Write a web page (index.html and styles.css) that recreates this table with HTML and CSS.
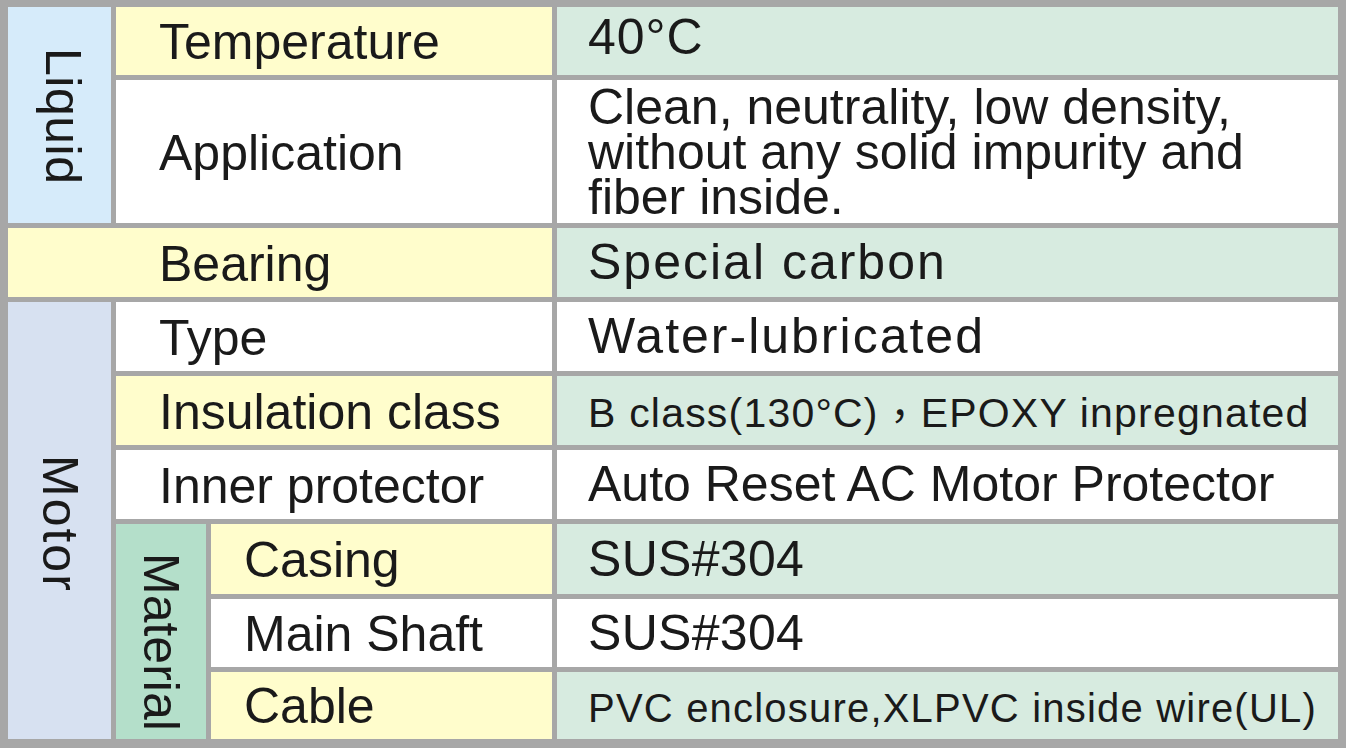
FILE: index.html
```html
<!DOCTYPE html>
<html lang="en">
<head>
<meta charset="utf-8">
<title>Specifications</title>
<link rel="stylesheet" href="styles.css">
</head>
<body>
<div class="spec">
  <div class="group liquid"><span class="vtext">Liquid</span></div>
  <div class="label yellow r1">Temperature</div>
  <div class="value green r1 up">40°C</div>
  <div class="label white r2">Application</div>
  <div class="value white r2 multi">Clean, neutrality, low density,<br>without any solid impurity and<br>fiber inside.</div>
  <div class="label yellow r3 bearing">Bearing</div>
  <div class="value green r3 wide">Special carbon</div>
  <div class="group motor"><span class="vtext">Motor</span></div>
  <div class="label white r4">Type</div>
  <div class="value white r4 wide">Water-lubricated</div>
  <div class="label yellow r5">Insulation class</div>
  <div class="value green r5 small bclass">B class(130°C)<span class="fwcomma">，</span>EPOXY inpregnated</div>
  <div class="label white r6">Inner protector</div>
  <div class="value white r6">Auto Reset AC Motor Protector</div>
  <div class="group material"><span class="vtext">Material</span></div>
  <div class="sublabel yellow r7">Casing</div>
  <div class="value green r7 sus">SUS#304</div>
  <div class="sublabel white r8">Main Shaft</div>
  <div class="value white r8 sus">SUS#304</div>
  <div class="sublabel yellow r9">Cable</div>
  <div class="value green r9 small">PVC enclosure,XLPVC inside wire(UL)</div>
</div>
</body>
</html>
```
FILE: styles.css
```css
html, body {
  margin: 0;
  padding: 0;
}
body {
  width: 1346px;
  height: 748px;
  background: #a7a7a7;
  font-family: "Liberation Sans", Arial, "Noto Sans CJK TC", sans-serif;
  color: #1a1a1a;
  overflow: hidden;
}
.spec {
  box-sizing: border-box;
  width: 1346px;
  height: 748px;
  padding: 7px 8px 9px 8px;
  display: grid;
  grid-template-columns: 103px 90px 341px 781px;
  grid-template-rows: 68px 143px 69px 69px 69px 69px 70px 68px 67px;
  column-gap: 5px;
  row-gap: 5px;
}
.spec > div {
  display: flex;
  align-items: center;
  font-size: 50px;
  line-height: 45px;
  white-space: nowrap;
}
.yellow { background: #fffdcc; }
.green { background: #d7ebe0; }
.white { background: #ffffff; }

.r1 { grid-row: 1; }
.r2 { grid-row: 2; }
.r3 { grid-row: 3; }
.r4 { grid-row: 4; }
.r5 { grid-row: 5; }
.r6 { grid-row: 6; }
.r7 { grid-row: 7; }
.r8 { grid-row: 8; }
.r9 { grid-row: 9; }

.label {
  grid-column: 2 / 4;
  padding-left: 43px;
  padding-top: 3px;
}
.label.bearing {
  grid-column: 1 / 4;
  padding-left: 151px;
}
.sublabel {
  grid-column: 3;
  padding-left: 33px;
  padding-top: 2px;
}
.value {
  grid-column: 4;
  padding-left: 31px;
}
.value.up {
  padding-bottom: 8px;
  letter-spacing: 1px;
}
.value.multi { padding-top: 2px; }
.value.wide { letter-spacing: 2px; }
.value.sus { letter-spacing: 0.3px; }
.value.small {
  font-size: 40px;
  letter-spacing: 1.2px;
  padding-top: 5px;
}
.value.bclass {
  font-size: 41px;
  letter-spacing: 1.2px;
}
.fwcomma {
  font-family: "Noto Sans CJK TC", sans-serif;
  letter-spacing: 0;
  width: 42px;
  text-align: center;
  display: inline-block;
}

.group {
  justify-content: center;
}
.vtext {
  writing-mode: vertical-rl;
  line-height: 50px;
}
.liquid {
  grid-column: 1;
  grid-row: 1 / 3;
  background: #d6ebfa;
  padding-left: 6px;
}
.liquid .vtext { letter-spacing: 0.5px; padding-top: 2px; }
.motor {
  grid-column: 1;
  grid-row: 4 / 10;
  background: #d7e1f1;
}
.motor .vtext { letter-spacing: 2px; padding-top: 6px; }
.material {
  grid-column: 2;
  grid-row: 7 / 10;
  background: #b4dfca;
}
.material .vtext { padding-top: 20px; }
```
